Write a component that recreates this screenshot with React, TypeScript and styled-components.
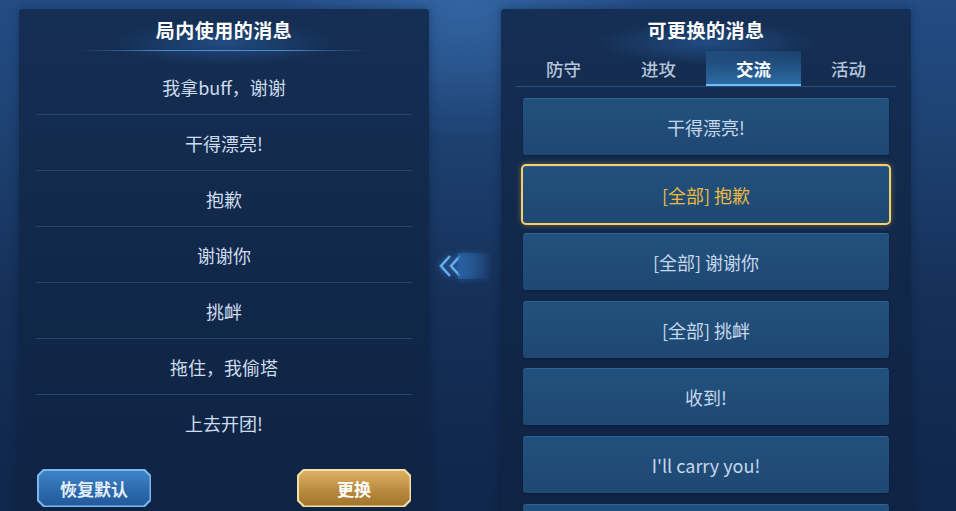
import styled, { createGlobalStyle } from "styled-components";

// ------ data ------
const usedMessages = [
  "我拿buff，谢谢",
  "干得漂亮!",
  "抱歉",
  "谢谢你",
  "挑衅",
  "拖住，我偷塔",
  "上去开团!",
];

const tabs = ["防守", "进攻", "交流", "活动"];

const cards = [
  { text: "干得漂亮!" },
  { text: "[全部] 抱歉", selected: true },
  { text: "[全部] 谢谢你" },
  { text: "[全部] 挑衅" },
  { text: "收到!" },
  { text: "I'll carry you!" },
  { text: "" },
];

function App() {
  return (
    <Screen>
      <GlobalStyle />

      {/* ------ left panel: messages in use ------ */}
      <Panel>
        <Title>局内使用的消息</Title>
        <TitleLine />
        <MessageList>
          {usedMessages.map((msg) => (
            <MessageRow key={msg}>{msg}</MessageRow>
          ))}
        </MessageList>
        <ButtonBar>
          <ChamferButton $tone="blue">
            <ButtonFace $tone="blue">恢复默认</ButtonFace>
          </ChamferButton>
          <ChamferButton $tone="gold">
            <ButtonFace $tone="gold">更换</ButtonFace>
          </ChamferButton>
        </ButtonBar>
      </Panel>

      {/* ------ middle arrow ------ */}
      <Middle>
        <ArrowWrap>
          <svg width="26" height="24" viewBox="0 0 26 24">
            <path
              d="M12 2 L3 12 L12 22"
              fill="none"
              stroke="#62acf0"
              strokeWidth="2.6"
            />
            <path
              d="M22 2 L13 12 L22 22"
              fill="none"
              stroke="#62acf0"
              strokeWidth="2.6"
            />
          </svg>
          <ArrowTail />
        </ArrowWrap>
      </Middle>

      {/* ------ right panel: replaceable messages ------ */}
      <Panel>
        <Title>可更换的消息</Title>
        <TitleLine $inset={46} />
        <TabBar>
          {tabs.map((tab) => (
            <Tab key={tab} $active={tab === "交流"}>
              {tab}
            </Tab>
          ))}
        </TabBar>
        <CardList>
          {cards.map((card, i) => (
            <Card key={i} $selected={!!card.selected}>
              {card.text}
            </Card>
          ))}
        </CardList>
      </Panel>
    </Screen>
  );
}

export default App;

// ------ component styles -------
const GlobalStyle = createGlobalStyle`
  html, body {
    margin: 0;
    padding: 0;
    background: #112848;
  }
  * {
    box-sizing: border-box;
  }
`;

const Screen = styled.div`
  width: 956px;
  height: 511px;
  overflow: hidden;
  display: flex;
  align-items: flex-start;
  padding: 9px 0 0 19px;
  font-family: "Noto Sans CJK SC", "Noto Sans", sans-serif;
  background:
    radial-gradient(ellipse 260px 200px at 465px 0px, rgba(70, 130, 200, 0.45), transparent 70%),
    linear-gradient(180deg, #244d85 0%, #1c3f6e 30%, #152f57 60%, #10264a 100%);
`;

const Panel = styled.section`
  width: 410px;
  height: 520px;
  flex-shrink: 0;
  display: flex;
  flex-direction: column;
  border-radius: 3px 3px 0 0;
  background:
    radial-gradient(ellipse 150px 30px at 50% 34px, rgba(45, 105, 175, 0.5), transparent 75%),
    linear-gradient(180deg, #152e53 0%, #12294b 40%, #0f2343 100%);
  box-shadow: 0 0 8px rgba(5, 15, 35, 0.35);

  & + & {
    width: 411px;
  }
`;

const Title = styled.h2`
  margin: 0;
  height: 41px;
  line-height: 41px;
  text-align: center;
  color: #ffffff;
  font-size: 19px;
  font-weight: 700;
  letter-spacing: 0.5px;
`;

const TitleLine = styled.div<{ $inset?: number }>`
  height: 1px;
  margin: 0 ${(p) => p.$inset ?? 60}px;
  background: linear-gradient(
    90deg,
    rgba(70, 140, 210, 0),
    rgba(80, 150, 220, 0.9) 30%,
    rgba(80, 150, 220, 0.9) 70%,
    rgba(70, 140, 210, 0)
  );
`;

const MessageList = styled.ul`
  list-style: none;
  margin: 8px 17px 0;
  padding: 0;
`;

const MessageRow = styled.li`
  height: 56px;
  display: flex;
  align-items: center;
  justify-content: center;
  color: #cddcee;
  font-size: 18px;
  border-bottom: 1px solid #26456e;

  &:last-child {
    border-bottom: none;
  }
`;

const ButtonBar = styled.div`
  display: flex;
  justify-content: space-between;
  margin: 18px 18px 0;
`;

const chamfer =
  "polygon(6px 0, calc(100% - 6px) 0, 100% 6px, 100% calc(100% - 6px), calc(100% - 6px) 100%, 6px 100%, 0 calc(100% - 6px), 0 6px)";

const ChamferButton = styled.button<{ $tone: "blue" | "gold" }>`
  width: 114px;
  height: 38px;
  padding: 1.5px;
  border: none;
  cursor: pointer;
  clip-path: ${chamfer};
  background: ${(p) => (p.$tone === "gold" ? "#f2e0a8" : "#78b8ee")};
`;

const ButtonFace = styled.span<{ $tone: "blue" | "gold" }>`
  display: flex;
  align-items: center;
  justify-content: center;
  width: 100%;
  height: 100%;
  clip-path: ${chamfer};
  font-family: "Noto Sans CJK SC", sans-serif;
  font-size: 17px;
  font-weight: 700;
  color: ${(p) => (p.$tone === "gold" ? "#ffffff" : "#e3eefa")};
  background: ${(p) =>
    p.$tone === "gold"
      ? "linear-gradient(180deg, #dcb062 0%, #b98b3e 55%, #a2752c 100%)"
      : "linear-gradient(180deg, #3f83c6 0%, #2c6aad 55%, #23599a 100%)"};
`;

const Middle = styled.div`
  width: 72px;
  height: 511px;
  flex-shrink: 0;
  display: flex;
  align-items: center;
`;

const ArrowWrap = styled.div`
  display: flex;
  align-items: center;
  margin: 0 0 0 9px;
  position: relative;
  top: 1px;
  filter: drop-shadow(0 0 3px rgba(80, 160, 240, 0.6));
`;

const ArrowTail = styled.div`
  width: 34px;
  height: 26px;
  margin-left: -6px;
  background: linear-gradient(90deg, rgba(40, 100, 170, 0.7), rgba(30, 80, 150, 0));
`;

const TabBar = styled.div`
  display: flex;
  margin: 1px 15px 0;
  border-bottom: 1px solid #2b4f7c;
`;

const Tab = styled.div<{ $active?: boolean }>`
  flex: 1;
  height: 35px;
  display: flex;
  align-items: center;
  justify-content: center;
  font-size: 17.5px;
  font-weight: ${(p) => (p.$active ? 700 : 500)};
  color: ${(p) => (p.$active ? "#ffffff" : "#b4c5da")};
  background: ${(p) =>
    p.$active
      ? "linear-gradient(180deg, rgba(40, 95, 150, 0.35) 0%, #2c6ea8 100%)"
      : "transparent"};
  box-shadow: ${(p) => (p.$active ? "inset 0 -2px 0 #6cc0f4" : "none")};
`;

const CardList = styled.div`
  display: flex;
  flex-direction: column;
  gap: 10.6px;
  margin: 11px 22px 0;
`;

const Card = styled.div<{ $selected?: boolean }>`
  height: 57px;
  flex-shrink: 0;
  display: flex;
  align-items: center;
  justify-content: center;
  border-radius: 3px;
  font-size: 18px;
  color: ${(p) => (p.$selected ? "#ecb93e" : "#c6d7eb")};
  background: linear-gradient(180deg, #22507d 0%, #1e4872 100%);
  border-top: 1px solid #2f6394;
  outline: ${(p) => (p.$selected ? "2px solid #f5cf6a" : "none")};
  outline-offset: 0;
  box-shadow: ${(p) =>
    p.$selected
      ? "0 0 6px 1px rgba(245, 190, 70, 0.55)"
      : "0 1px 2px rgba(5, 15, 35, 0.4)"};
`;
